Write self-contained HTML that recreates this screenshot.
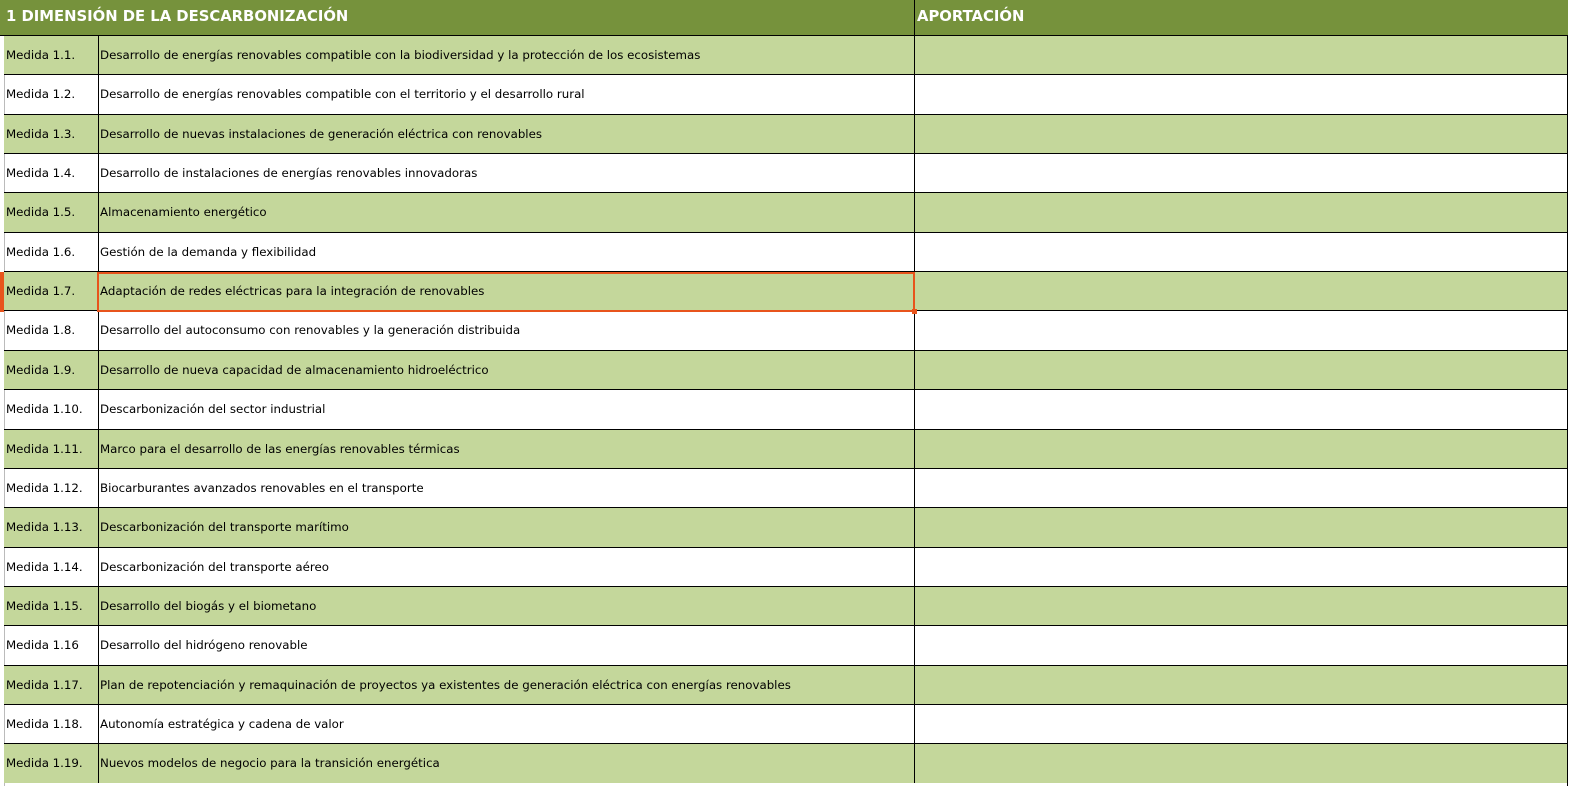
<!DOCTYPE html>
<html><head><meta charset="utf-8"><style>
body{margin:0;width:1593px;height:794px;background:#fff;position:relative;overflow:hidden;font-family:"DejaVu Sans","Liberation Sans",sans-serif;}
.h{position:absolute;top:0;height:35px;background:#76923c;color:#fff;font-weight:bold;font-size:14.8px;line-height:33px;}
.r{position:absolute;left:4px;width:1564px;height:39px;border-top:1px solid #000;}
.r.g{background:#c4d79b}
.r div{position:absolute;top:0;height:39px;line-height:39px;font-size:11.8px;color:#000;white-space:nowrap;}
.c1{left:2px}
.c2{left:94px;width:817px;border-left:1px solid #000;padding-left:1px}
.c3{left:910px;width:652px;height:39px;border-left:1px solid #000}
</style></head><body>
<div class="h" style="left:0;width:914px;padding-left:6px;box-sizing:border-box">1 DIMENSIÓN DE LA DESCARBONIZACIÓN</div>
<div class="h" style="left:914px;width:654px;border-left:1px solid #000;padding-left:2px;box-sizing:border-box">APORTACIÓN</div>
<div style="position:absolute;left:0;top:35px;width:1568px;height:1px;background:#000"></div>
<div style="position:absolute;left:4px;top:36px;width:1px;height:750px;background:#bbb"></div>
<div id="rows"></div>
<script>
var t=["Desarrollo de energías renovables compatible con la biodiversidad y la protección de los ecosistemas","Desarrollo de energías renovables compatible con el territorio y el desarrollo rural","Desarrollo de nuevas instalaciones de generación eléctrica con renovables","Desarrollo de instalaciones de energías renovables innovadoras","Almacenamiento energético","Gestión de la demanda y flexibilidad","Adaptación de redes eléctricas para la integración de renovables","Desarrollo del autoconsumo con renovables y la generación distribuida","Desarrollo de nueva capacidad de almacenamiento hidroeléctrico","Descarbonización del sector industrial","Marco para el desarrollo de las energías renovables térmicas","Biocarburantes avanzados renovables en el transporte","Descarbonización del transporte marítimo","Descarbonización del transporte aéreo","Desarrollo del biogás y el biometano","Desarrollo del hidrógeno renovable","Plan de repotenciación y remaquinación de proyectos ya existentes de generación eléctrica con energías renovables","Autonomía estratégica y cadena de valor","Nuevos modelos de negocio para la transición energética"];
var h="";
for(var i=0;i<19;i++){var y=36+i*39.35;var lab="Medida 1."+(i+1)+(i==15?"":".");
h+='<div class="r'+(i%2==0?' g':'')+'" style="top:'+(y-1)+'px"><div class="c1">'+lab+'</div><div class="c2">'+t[i]+'</div><div class="c3"></div></div>';}
document.getElementById("rows").innerHTML=h;
</script>
<div style="position:absolute;left:97px;top:272px;width:818px;height:40px;border:2px solid #e8541c;box-sizing:border-box"></div>
<div style="position:absolute;left:912px;top:309px;width:5px;height:5px;background:#e8541c"></div>
<div style="position:absolute;left:0;top:272px;width:4px;height:40px;background:#e8541c"></div>
<div style="position:absolute;left:1567px;top:36px;width:1px;height:750px;background:#000"></div>
</body></html>
